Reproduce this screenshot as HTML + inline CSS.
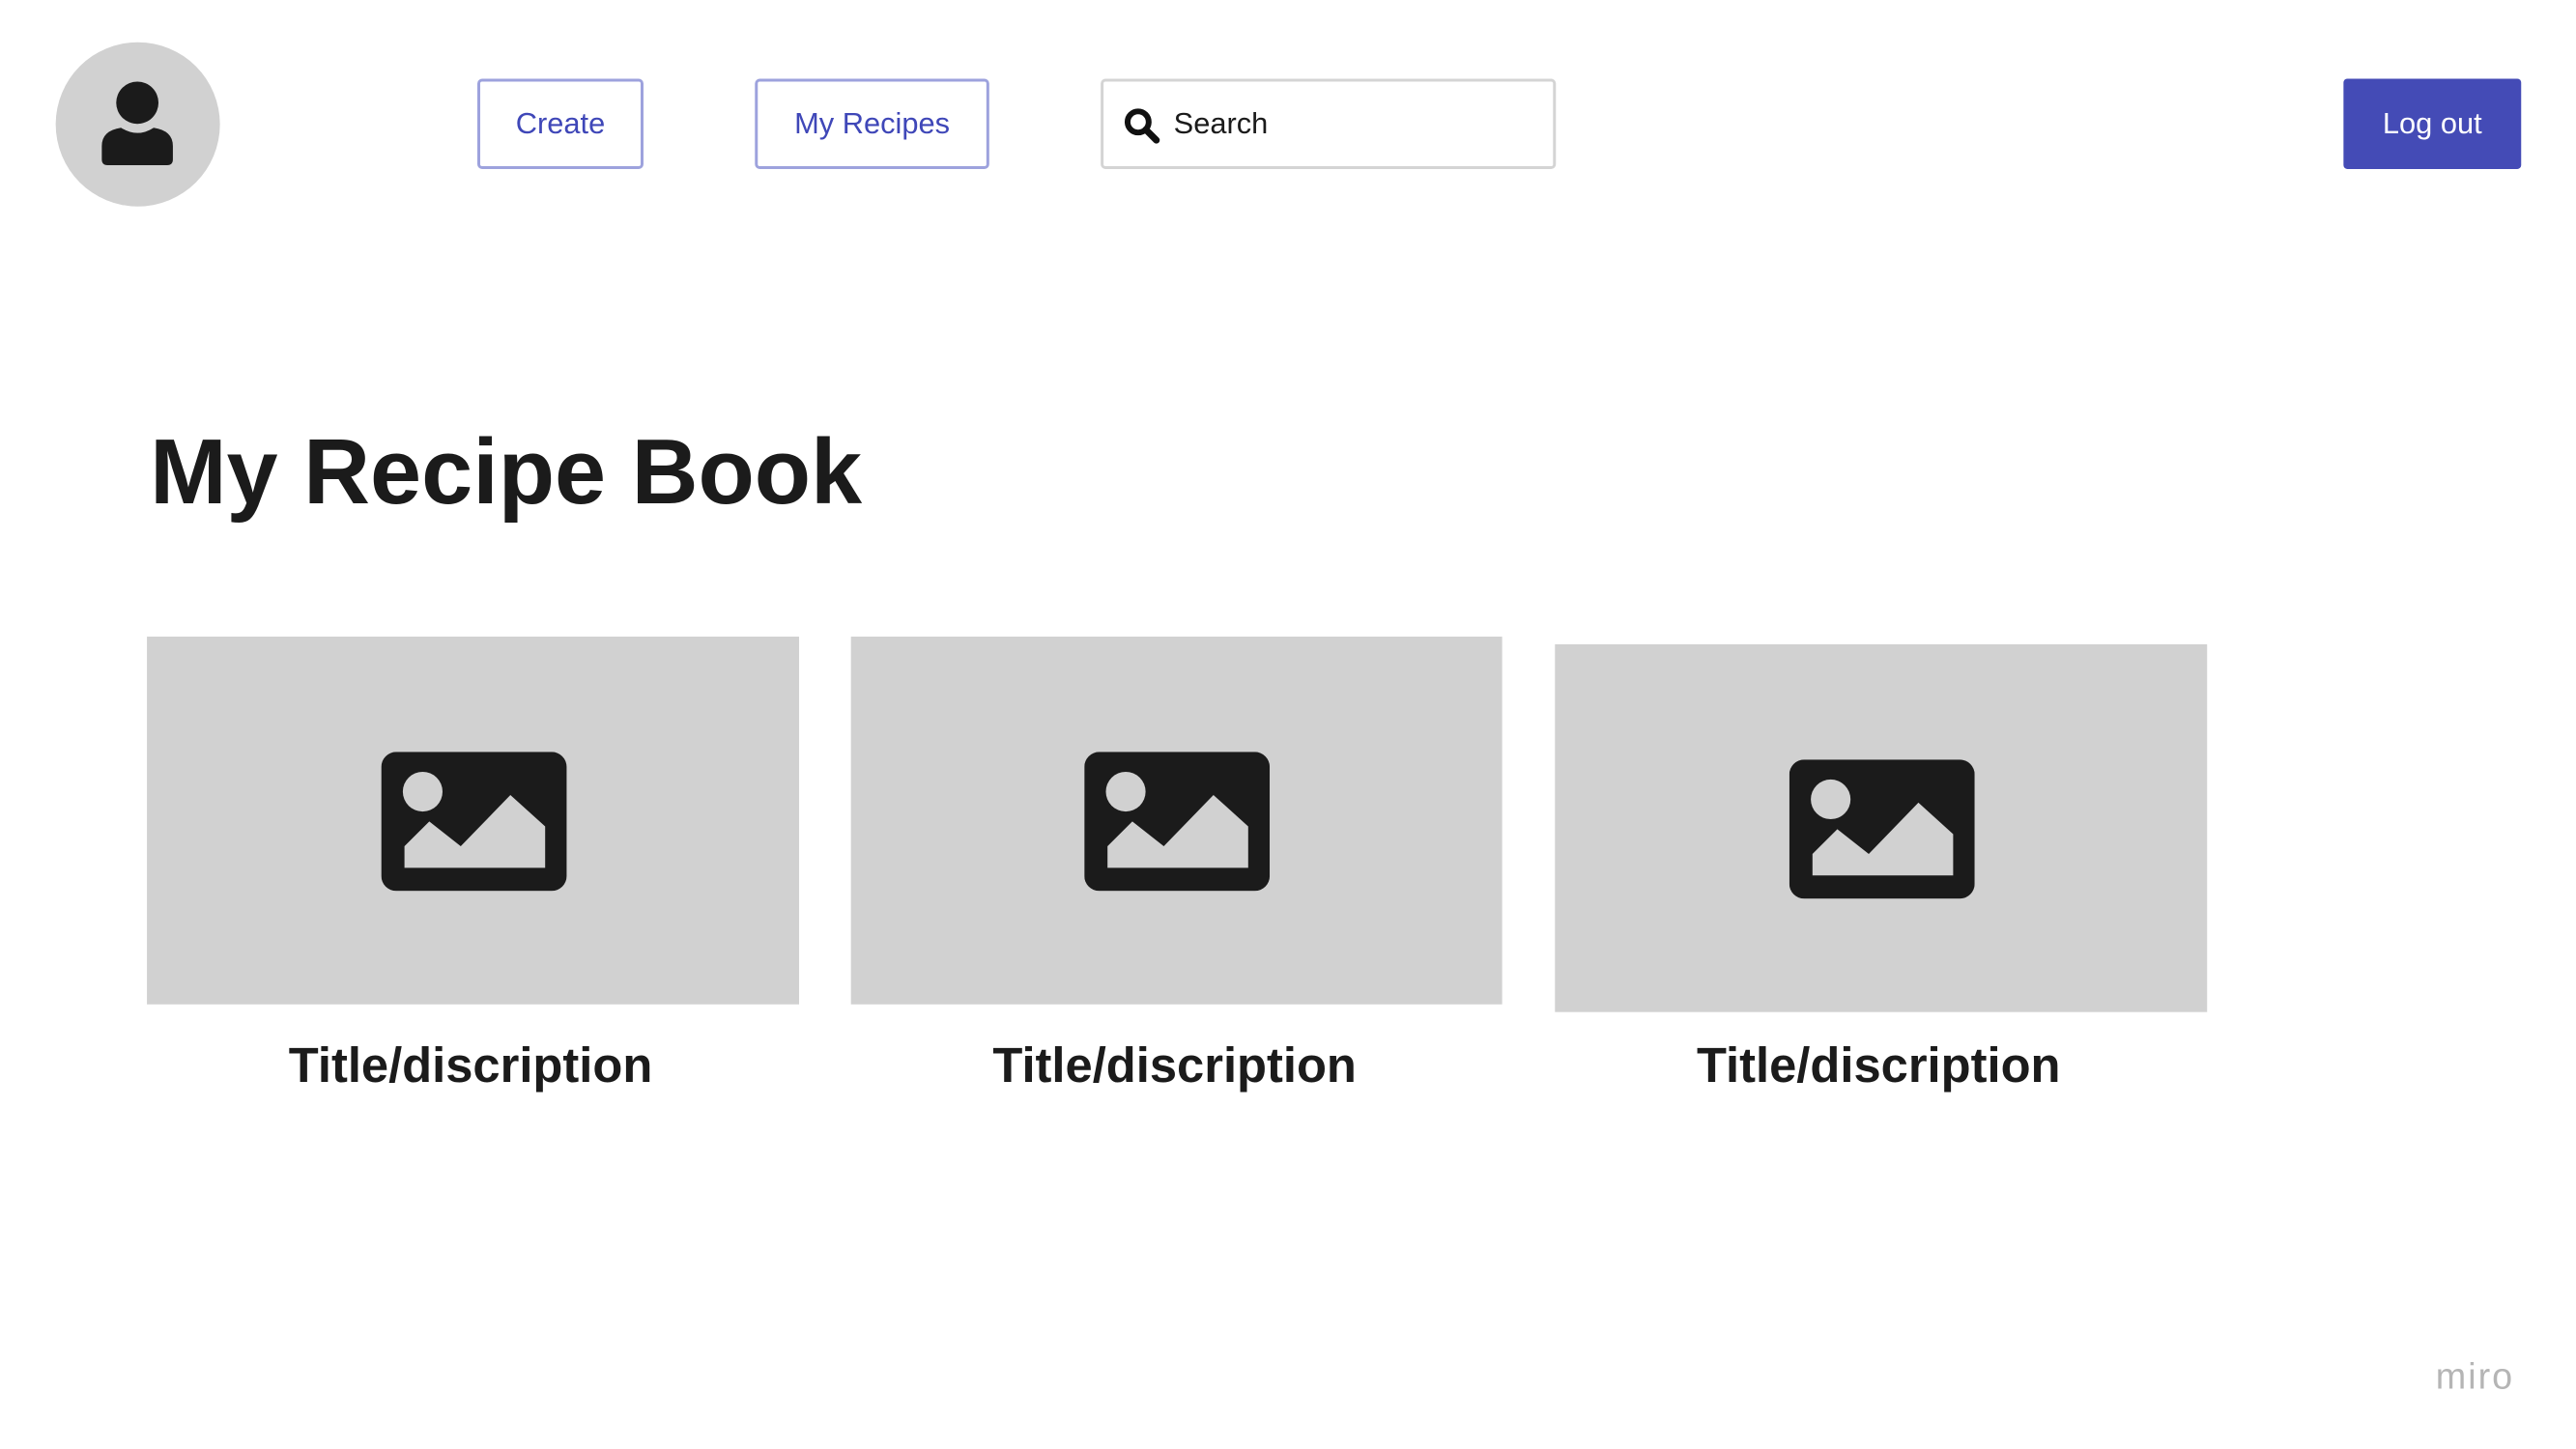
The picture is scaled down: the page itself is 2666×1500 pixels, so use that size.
<!DOCTYPE html>
<html><head><meta charset="utf-8"><style>
html,body{margin:0;padding:0;background:#fff;width:2666px;height:1500px;overflow:hidden;position:relative;font-family:"Liberation Sans",sans-serif}
#w{position:absolute;left:0;top:0;width:2666px;height:1500px;transform:scale(0.994);transform-origin:0 0}
.abs{position:absolute;box-sizing:border-box}
.btn{border:3px solid #9da2dd;border-radius:5px;color:#3f47b8;font-size:31px;display:flex;align-items:center;justify-content:center;background:#fff}
.card{background:#d1d1d1}
.card svg{position:absolute;left:50%;top:50%;width:193px;height:145px;margin-left:-96px;margin-top:-72px}
.t{font-weight:bold;font-size:51px;color:#1b1b1b;text-align:center;width:684px}
</style></head><body><div id="w">
<div class="abs" style="left:58px;top:44px;width:171px;height:171px;border-radius:50%;background:#d1d1d1"></div>
<svg class="abs" style="left:58px;top:44px" width="171" height="171" viewBox="0 0 171 171">
<circle cx="85" cy="63" r="22" fill="#1b1b1b"/>
<path d="M48 122 L48 108 Q48 92 68 89 Q85 100 102 89 Q122 92 122 108 L122 122 Q122 128 116 128 L54 128 Q48 128 48 122 Z" fill="#1b1b1b"/>
</svg>
<div class="abs btn" style="left:497px;top:82px;width:173px;height:94px">Create</div>
<div class="abs btn" style="left:786px;top:82px;width:244px;height:94px">My Recipes</div>
<div class="abs" style="left:1146px;top:82px;width:474px;height:94px;border:3px solid #d4d4d4;border-radius:5px"></div>
<svg class="abs" style="left:1170px;top:112px" width="40" height="40" viewBox="0 0 40 40"><circle cx="15" cy="15" r="11" fill="none" stroke="#111" stroke-width="6"/><path d="M23 23 L34 34" stroke="#111" stroke-width="7" stroke-linecap="round"/></svg>
<div class="abs" style="left:1222px;top:111px;font-size:31px;color:#1b1b1b">Search</div>
<div class="abs" style="left:2440px;top:82px;width:185px;height:94px;background:#444bb6;border-radius:4px;color:#fff;font-size:31px;display:flex;align-items:center;justify-content:center">Log out</div>
<div class="abs" style="left:156px;top:427px;font-size:96px;font-weight:bold;color:#1b1b1b;line-height:130px;white-space:nowrap">My Recipe Book</div>
<div class="abs card" style="left:153px;top:663px;width:679px;height:383px"><svg viewBox="0 0 112 84"><rect width="112" height="84" rx="9" fill="#1b1b1b"/><circle cx="25" cy="24" r="12" fill="#d1d1d1"/><path d="M14 70 L14 57 L29 42 L48 57 L78 26 L99 45 L99 70 Z" fill="#d1d1d1"/></svg></div>
<div class="abs card" style="left:886px;top:663px;width:678px;height:383px"><svg viewBox="0 0 112 84"><rect width="112" height="84" rx="9" fill="#1b1b1b"/><circle cx="25" cy="24" r="12" fill="#d1d1d1"/><path d="M14 70 L14 57 L29 42 L48 57 L78 26 L99 45 L99 70 Z" fill="#d1d1d1"/></svg></div>
<div class="abs card" style="left:1619px;top:671px;width:679px;height:383px"><svg viewBox="0 0 112 84"><rect width="112" height="84" rx="9" fill="#1b1b1b"/><circle cx="25" cy="24" r="12" fill="#d1d1d1"/><path d="M14 70 L14 57 L29 42 L48 57 L78 26 L99 45 L99 70 Z" fill="#d1d1d1"/></svg></div>
<div class="abs t" style="left:148px;top:1080px">Title/discription</div>
<div class="abs t" style="left:881px;top:1080px">Title/discription</div>
<div class="abs t" style="left:1614px;top:1080px">Title/discription</div>
<div class="abs" style="left:2536px;top:1413px;font-size:38px;color:#b5b5b5;letter-spacing:2px">miro</div>
</div></body></html>
